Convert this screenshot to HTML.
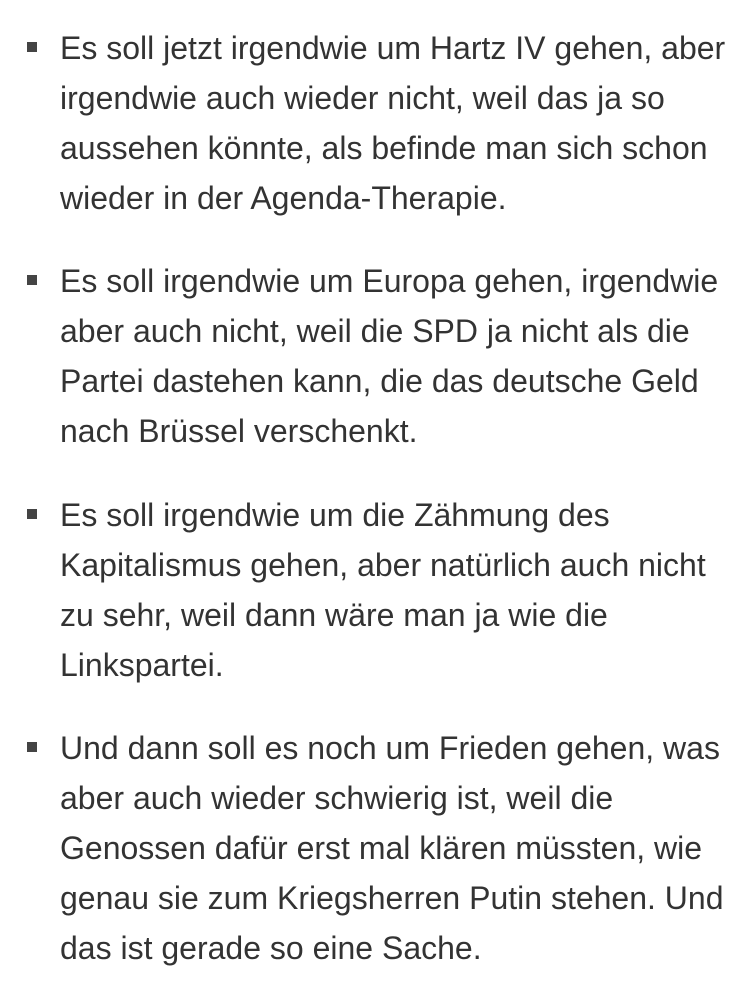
<!DOCTYPE html>
<html><head><meta charset="utf-8"><style>
html,body{margin:0;padding:0;background:#fff;width:750px;height:986px;overflow:hidden}
body{font-family:"Liberation Sans",sans-serif;color:#333;font-size:32px}
.item{position:absolute;left:0;width:750px}
.l{position:absolute;left:60px;white-space:nowrap;line-height:50px;height:50px}
.b{position:absolute;left:27px;width:10px;height:10px;background:#444}
</style></head><body>
<div class="item" style="top:23px">
<div class="b" style="top:19px"></div>
<div class="l" style="top:0">Es soll jetzt irgendwie um Hartz IV gehen, aber</div>
<div class="l" style="top:50px">irgendwie auch wieder nicht, weil das ja so</div>
<div class="l" style="top:100px">aussehen könnte, als befinde man sich schon</div>
<div class="l" style="top:150px">wieder in der Agenda-Therapie.</div>
</div>
<div class="item" style="top:256px">
<div class="b" style="top:19px"></div>
<div class="l" style="top:0">Es soll irgendwie um Europa gehen, irgendwie</div>
<div class="l" style="top:50px">aber auch nicht, weil die SPD ja nicht als die</div>
<div class="l" style="top:100px">Partei dastehen kann, die das deutsche Geld</div>
<div class="l" style="top:150px">nach Brüssel verschenkt.</div>
</div>
<div class="item" style="top:490px">
<div class="b" style="top:19px"></div>
<div class="l" style="top:0">Es soll irgendwie um die Zähmung des</div>
<div class="l" style="top:50px">Kapitalismus gehen, aber natürlich auch nicht</div>
<div class="l" style="top:100px">zu sehr, weil dann wäre man ja wie die</div>
<div class="l" style="top:150px">Linkspartei.</div>
</div>
<div class="item" style="top:723px">
<div class="b" style="top:19px"></div>
<div class="l" style="top:0">Und dann soll es noch um Frieden gehen, was</div>
<div class="l" style="top:50px">aber auch wieder schwierig ist, weil die</div>
<div class="l" style="top:100px">Genossen dafür erst mal klären müssten, wie</div>
<div class="l" style="top:150px">genau sie zum Kriegsherren Putin stehen. Und</div>
<div class="l" style="top:200px">das ist gerade so eine Sache.</div>
</div>
</body></html>
